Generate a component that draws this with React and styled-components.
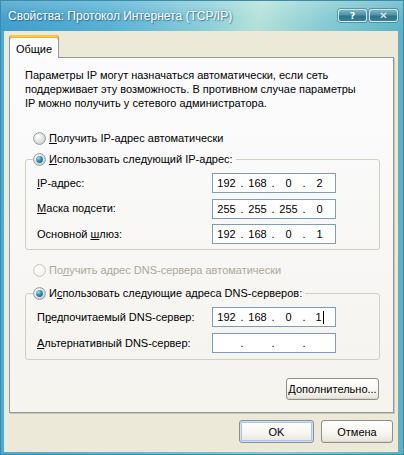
import React, { useId } from 'react';
import styled, { createGlobalStyle } from 'styled-components';

const Global = createGlobalStyle`
  html, body { margin: 0; padding: 0; width: 404px; height: 455px; overflow: hidden; background: #fff; }
  body { font-family: "Liberation Sans", Arial, sans-serif; font-size: 11px; color: #000; }
  *, *::before, *::after { box-sizing: border-box; }
`;

const Window = styled.div`
  width: 404px;
  height: 455px;
  display: flex;
  flex-direction: column;
  border: 1px solid #3d8ca6;
  background: linear-gradient(90deg, #4ea8cf 0%, #6dbdd6 45%, #86cbd3 70%, #5bb2c4 100%);
`;

const TitleBar = styled.div`
  height: 30px;
  flex: none;
  display: flex;
  align-items: flex-start;
  justify-content: space-between;
  padding: 0 5px 0 7px;
  background:
    linear-gradient(180deg, rgba(255,255,255,0.22) 0%, rgba(255,255,255,0.05) 55%, rgba(255,255,255,0) 100%),
    linear-gradient(100deg, #3c9ccb 0%, #56b1d6 28%, #8bcfd9 52%, #b3e1d8 64%, #86cbd3 80%, #5cb3c6 100%);
`;

const Title = styled.div`
  margin-top: 8px;
  font-size: 12px;
  line-height: 14px;
  color: #fff;
  text-shadow: 1px 1px 1px rgba(20, 70, 100, 0.55), 0 0 3px rgba(30, 90, 120, 0.45);
  white-space: nowrap;
`;

const CaptionButtons = styled.div`
  display: flex;
  gap: 2px;
  margin-top: 8px;
`;

const CaptionButton = styled.div`
  width: 29px;
  height: 13px;
  border: 1px solid rgba(230, 245, 250, 0.85);
  border-radius: 3px;
  background: linear-gradient(180deg, #7fb4c4 0%, #4f92a7 45%, #2d7287 55%, #3a8299 100%);
  display: flex;
  align-items: center;
  justify-content: center;
  color: #fff;
  font-family: "DejaVu Sans", sans-serif;
  font-weight: bold;
  font-size: ${p => p.$fs || 10}px;
  line-height: 10px;
  box-shadow: 0 0 0 1px rgba(40, 100, 120, 0.5);
`;

const Client = styled.div`
  flex: 1;
  margin: 0 5px 2px 3px;
  background: #ece9d8;
  display: flex;
  flex-direction: column;
  padding: 4px 4px 9px 5px;
`;

const TabStrip = styled.div`
  height: 22px;
  flex: none;
  display: flex;
  align-items: flex-end;
`;

const Tab = styled.div`
  position: relative;
  z-index: 1;
  width: 50px;
  height: 23px;
  margin-bottom: -1px;
  border: 1px solid #919b9c;
  border-top: none;
  border-bottom: none;
  border-radius: 3px 3px 0 0;
  background: #fcfcfe;
  box-shadow: inset 0 2px 0 #ffc83c, inset 0 3px 0 #f5b347;
  display: flex;
  align-items: center;
  justify-content: center;
  padding-top: 4px;
`;

const Panel = styled.div`
  flex: 1;
  display: flex;
  flex-direction: column;
  border: 1px solid #919b9c;
  box-shadow: 1px 1px 0 #c9c6b6;
  background: linear-gradient(180deg, #fcfcfe 0%, #f4f3ee 100%);
  padding: 10px 13px 12px 15px;
`;

const Paragraph = styled.p`
  margin: 0;
  line-height: 14px;
`;

const RadioRow = styled.div`
  height: 17px;
  display: flex;
  align-items: center;
  gap: 3px;
  margin-top: ${p => p.$mt || 0}px;
  padding-left: 8px;
  color: ${p => (p.$disabled ? '#aca899' : '#000')};
`;

const Group = styled.fieldset`
  margin: ${p => p.$mt || 0}px 0 0 0;
  padding: 0;
  border: 1px solid #d0d0bf;
  border-radius: 3px;
  min-inline-size: 0;
`;

const Legend = styled.legend`
  display: flex;
  align-items: center;
  gap: 3px;
  height: 17px;
  margin-left: 7px;
  padding: 0 3px 0 0;
`;

const Fields = styled.div`
  display: grid;
  grid-template-columns: 175px 124px;
  grid-auto-rows: 20px;
  row-gap: ${p => p.$gap}px;
  align-items: center;
  padding: 5.5px 0 ${p => p.$pb}px 11px;
`;

const Label = styled.label`
  line-height: 13px;
`;

const IpBox = styled.div`
  height: 20px;
  border: 1px solid #7f9db9;
  background: #fff;
  display: flex;
  align-items: center;
`;

const Octet = styled.span`
  width: 27px;
  display: flex;
  justify-content: center;
  align-items: center;
`;

const Dot = styled.span`
  width: 4px;
  text-align: center;
`;

const Caret = styled.span`
  display: inline-block;
  width: 1px;
  height: 13px;
  background: #000;
  margin-left: 1px;
`;

const U = styled.span`
  text-decoration: underline;
  text-underline-offset: 1px;
`;

const PanelFooter = styled.div`
  display: flex;
  justify-content: flex-end;
  margin-top: 18px;
  padding-right: 1px;
`;

const Button = styled.div`
  width: ${p => p.$w}px;
  height: ${p => p.$h}px;
  border: 1px solid #8e8f8c;
  border-radius: 3px;
  background: linear-gradient(180deg, #ffffff 0%, #f6f5f0 60%, #e6e3d8 100%);
  display: flex;
  align-items: center;
  justify-content: center;
  box-shadow: ${p => (p.$default ? 'inset 0 0 0 1px #cfe0fa, inset 0 0 0 2px #a8c3ee' : 'inset 0 -1px 0 #dcd8cb')};
`;

const Footer = styled.div`
  display: flex;
  justify-content: flex-end;
  gap: 7px;
  margin-top: 7px;
  padding-right: 1px;
`;

function Radio({ checked, disabled }) {
  const id = useId().replace(/:/g, '');
  return (
    <svg width="13" height="13" viewBox="0 0 13 13">
      <defs>
        <radialGradient id={`f${id}`} cx="0.35" cy="0.3" r="0.8">
          <stop offset="0" stopColor="#ffffff" />
          <stop offset="1" stopColor={disabled ? '#f1f0ea' : '#cfcfc7'} />
        </radialGradient>
        <radialGradient id={`d${id}`} cx="0.35" cy="0.3" r="0.8">
          <stop offset="0" stopColor="#a6e4f0" />
          <stop offset="0.45" stopColor="#3a9bbb" />
          <stop offset="1" stopColor="#15607e" />
        </radialGradient>
      </defs>
      <circle cx="6.5" cy="6.5" r="5.9" fill={`url(#f${id})`} stroke={disabled ? '#cac8bb' : '#8f9ba5'} strokeWidth="1" />
      {checked && <circle cx="6.5" cy="6.5" r="3.4" fill={`url(#d${id})`} />}
    </svg>
  );
}

function IpField({ values, caret }) {
  const parts = values || ['', '', '', ''];
  return (
    <IpBox>
      {parts.map((v, i) => (
        <React.Fragment key={i}>
          {i > 0 && <Dot>.</Dot>}
          <Octet>
            {v}
            {caret && i === 3 && <Caret />}
          </Octet>
        </React.Fragment>
      ))}
    </IpBox>
  );
}

export default function App() {
  return (
    <>
      <Global />
      <Window>
        <TitleBar>
          <Title>Свойства: Протокол Интернета (TCP/IP)</Title>
          <CaptionButtons>
            <CaptionButton $fs={9}>?</CaptionButton>
            <CaptionButton $fs={10}>✕</CaptionButton>
          </CaptionButtons>
        </TitleBar>
        <Client>
          <TabStrip>
            <Tab>Общие</Tab>
          </TabStrip>
          <Panel>
            <Paragraph>
              Параметры IP могут назначаться автоматически, если сеть<br />
              поддерживает эту возможность. В противном случае параметры<br />
              IP можно получить у сетевого администратора.
            </Paragraph>

            <RadioRow $mt={19.5}>
              <Radio />
              <span><U>П</U>олучить IP-адрес автоматически</span>
            </RadioRow>

            <Group $mt={4}>
              <Legend>
                <Radio checked />
                <span><U>И</U>спользовать следующий IP-адрес:</span>
              </Legend>
              <Fields $gap={5.5} $pb={5}>
                <Label><U>I</U>P-адрес:</Label>
                <IpField values={['192', '168', '0', '2']} />
                <Label><U>М</U>аска подсети:</Label>
                <IpField values={['255', '255', '255', '0']} />
                <Label>Основной <U>ш</U>люз:</Label>
                <IpField values={['192', '168', '0', '1']} />
              </Fields>
            </Group>

            <RadioRow $mt={11.5} $disabled>
              <Radio disabled />
              <span>По<U>л</U>учить адрес DNS-сервера автоматически</span>
            </RadioRow>

            <Group $mt={6}>
              <Legend>
                <Radio checked />
                <span>И<U>с</U>пользовать следующие адреса DNS-серверов:</span>
              </Legend>
              <Fields $gap={6} $pb={6}>
                <Label>П<U>р</U>едпочитаемый DNS-сервер:</Label>
                <IpField values={['192', '168', '0', '1']} caret />
                <Label><U>А</U>льтернативный DNS-сервер:</Label>
                <IpField />
              </Fields>
            </Group>

            <PanelFooter>
              <Button $w={93} $h={22}><span><U>Д</U>ополнительно...</span></Button>
            </PanelFooter>
          </Panel>
          <Footer>
            <Button $w={75} $h={23} $default>OK</Button>
            <Button $w={72} $h={23}>Отмена</Button>
          </Footer>
        </Client>
      </Window>
    </>
  );
}
